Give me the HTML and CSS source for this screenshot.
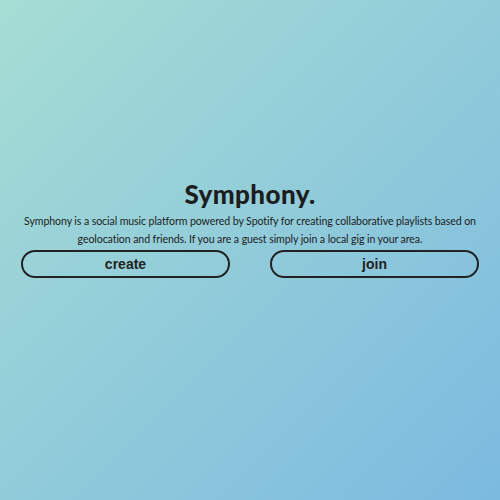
FILE: index.html
```html
<!DOCTYPE html>
<html>
<head>
<meta charset="utf-8">
<link rel="stylesheet" href="styles.css">
</head>
<body>
<main class="page">
  <section class="hero">
    <h1 class="title">Symphony.</h1>
    <p class="desc">Symphony is a social music platform powered by Spotify for creating collaborative playlists based on geolocation and friends. If you are a guest simply join a local gig in your area.</p>
    <div class="actions">
      <button class="btn">create</button>
      <button class="btn">join</button>
    </div>
  </section>
</main>
</body>
</html>
```
FILE: styles.css
```css
html, body {
  margin: 0;
  padding: 0;
  height: 100%;
}
body {
  background: linear-gradient(135deg, #a6ddd4 0%, #7cbae0 100%);
  font-family: "Lato", "Liberation Sans", sans-serif;
  color: #1d1d1d;
}
.page {
  height: 100%;
  display: flex;
  align-items: center;
  justify-content: center;
}
.hero {
  width: 458px;
  text-align: center;
  margin-bottom: 44px;
}
.title {
  margin: 0;
  font-size: 26px;
  font-weight: 900;
  letter-spacing: 0.4px;
  line-height: 30px;
}
.desc {
  margin: 3px -4px 2px;
  font-size: 10.6px;
  letter-spacing: -0.1px;
  line-height: 18px;
}
.actions {
  display: flex;
  justify-content: space-between;
}
.btn {
  width: 209px;
  height: 28px;
  border: 2px solid #222;
  border-radius: 14px;
  background: transparent;
  font-family: "Liberation Sans", sans-serif;
  font-weight: 700;
  font-size: 14px;
  color: #222;
  padding: 0;
}
```
